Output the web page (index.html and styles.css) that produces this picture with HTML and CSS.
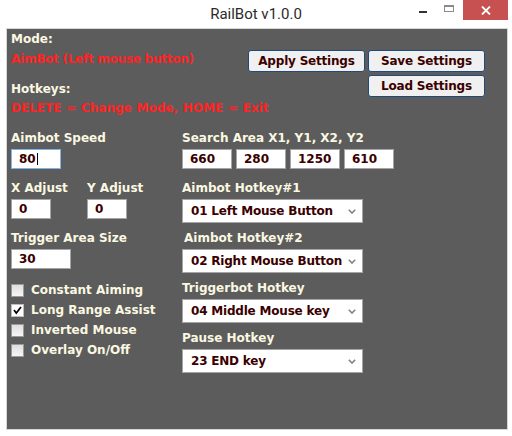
FILE: index.html
```html
<!DOCTYPE html>
<html>
<head>
<meta charset="utf-8">
<link rel="stylesheet" href="styles.css">
</head>
<body>
<div class="window">
  <div class="titlebar">
    <div></div>
    <div class="title">RailBot v1.0.0</div>
    <div class="controls">
      <div class="ctl"><span class="min"></span></div>
      <div class="ctl"><span class="max"></span></div>
      <div class="close">
        <svg width="10" height="9" viewBox="0 0 10 9"><path d="M1 0.5 L9 8.5 M9 0.5 L1 8.5" stroke="#fff" stroke-width="1.8" fill="none"/></svg>
      </div>
    </div>
  </div>
  <div class="panel">
    <div class="header">
      <div class="label r1">Mode:</div>
      <div class="red r2 tight">AimBot (Left mouse button)</div>
      <button class="btn apply">Apply Settings</button>
      <button class="btn save">Save Settings</button>
      <div class="label r3">Hotkeys:</div>
      <button class="btn load">Load Settings</button>
      <div class="red r4 wide">DELETE = Change Mode, HOME = Exit</div>
    </div>
    <div class="lower">
      <div class="col">
        <div class="group">
          <div class="label">Aimbot Speed</div>
          <div class="field focus w50">80<span class="caret"></span></div>
        </div>
        <div class="group row">
          <div class="sub">
            <div class="label">X Adjust</div>
            <div class="field w40">0</div>
          </div>
          <div class="sub">
            <div class="label">Y Adjust</div>
            <div class="field w40">0</div>
          </div>
        </div>
        <div class="group">
          <div class="label">Trigger Area Size</div>
          <div class="field w60">30</div>
        </div>
        <div class="checks">
          <div class="check"><span class="box"></span><span class="label">Constant Aiming</span></div>
          <div class="check"><span class="box on"><svg width="11" height="11" viewBox="0 0 11 11"><path d="M2 5 L4.3 8 L9 2" stroke="#000" stroke-width="1.7" fill="none"/></svg></span><span class="label">Long Range Assist</span></div>
          <div class="check"><span class="box"></span><span class="label">Inverted Mouse</span></div>
          <div class="check"><span class="box"></span><span class="label">Overlay On/Off</span></div>
        </div>
      </div>
      <div class="col">
        <div class="group">
          <div class="label">Search Area X1, Y1, X2, Y2</div>
          <div class="fields">
            <div class="field w50">660</div>
            <div class="field w50">280</div>
            <div class="field w50">1250</div>
            <div class="field w50">610</div>
          </div>
        </div>
        <div class="group">
          <div class="label">Aimbot Hotkey#1</div>
          <div class="select"><span>01 Left Mouse Button</span><svg class="chev" width="8" height="5" viewBox="0 0 8 5"><path d="M0.8 0.8 L4 4 L7.2 0.8" stroke="#808080" stroke-width="1.6" fill="none"/></svg></div>
        </div>
        <div class="group">
          <div class="label indent">Aimbot Hotkey#2</div>
          <div class="select"><span>02 Right Mouse Button</span><svg class="chev" width="8" height="5" viewBox="0 0 8 5"><path d="M0.8 0.8 L4 4 L7.2 0.8" stroke="#808080" stroke-width="1.6" fill="none"/></svg></div>
        </div>
        <div class="group">
          <div class="label">Triggerbot Hotkey</div>
          <div class="select"><span>04 Middle Mouse key</span><svg class="chev" width="8" height="5" viewBox="0 0 8 5"><path d="M0.8 0.8 L4 4 L7.2 0.8" stroke="#808080" stroke-width="1.6" fill="none"/></svg></div>
        </div>
        <div class="group">
          <div class="label">Pause Hotkey</div>
          <div class="select"><span>23 END key</span><svg class="chev" width="8" height="5" viewBox="0 0 8 5"><path d="M0.8 0.8 L4 4 L7.2 0.8" stroke="#808080" stroke-width="1.6" fill="none"/></svg></div>
        </div>
      </div>
    </div>
  </div>
</div>
</body>
</html>
```
FILE: styles.css
```css
html, body {
  margin: 0;
  padding: 0;
  background: #ffffff;
}
.window {
  width: 512px;
  height: 436px;
  background: #ffffff;
  overflow: hidden;
}
.titlebar {
  height: 28px;
  display: grid;
  grid-template-columns: 1fr auto 1fr;
  align-items: start;
}
.title {
  font-family: Roboto, "Noto Sans", sans-serif;
  font-size: 15px;
  color: #2b2b2b;
  line-height: 20px;
  padding-top: 4px;
}
.controls {
  display: flex;
  justify-content: flex-end;
  padding-right: 4px;
}
.ctl {
  width: 26px;
  height: 20px;
  display: flex;
  align-items: center;
  justify-content: center;
}
.min {
  width: 8px;
  height: 2px;
  background: #333;
  margin-top: 4px;
}
.max {
  width: 8px;
  height: 4px;
  border: 1px solid #8a8a8a;
  border-top-width: 2px;
  margin-top: -4px;
}
.close {
  width: 45px;
  height: 20px;
  margin-left: 1px;
  background: #c75050;
  display: flex;
  align-items: center;
  justify-content: center;
}
.panel {
  margin-left: 6px;
  width: 492px;
  height: 398px;
  border: 1px solid #d6d6d6;
  background: #5c5c5c;
  padding: 2px 4px 0;
  font-family: "DejaVu Sans", Verdana, sans-serif;
  font-weight: bold;
  font-size: 12px;
}
.label {
  color: #fbf8e2;
  line-height: 16px;
  height: 16px;
  white-space: nowrap;
}
.red {
  color: #ff2424;
  line-height: 16px;
  white-space: nowrap;
}
.tight { letter-spacing: -0.25px; }
.wide { word-spacing: 0.6px; }
.header {
  display: grid;
  grid-template-columns: 234px 117px 117px;
  grid-template-rows: 16px 22px 22px 16px;
  column-gap: 3px;
  row-gap: 3px;
}
.r1 { grid-column: 1; grid-row: 1; }
.r2 { grid-column: 1; grid-row: 2; margin-top: 1px; }
.r3 { grid-column: 1; grid-row: 3; align-self: end; }
.r4 { grid-column: 1 / 4; grid-row: 4; }
.apply { grid-column: 2; grid-row: 2; }
.save { grid-column: 3; grid-row: 2; }
.load { grid-column: 3; grid-row: 3; }
.btn {
  margin: 0;
  padding: 0;
  height: 22px;
  border: 1px solid #1f4a7e;
  border-radius: 3px;
  background: #f0f0f0;
  color: #3a0000;
  font-family: "DejaVu Sans", Verdana, sans-serif;
  font-weight: bold;
  font-size: 12px;
  letter-spacing: -0.2px;
}
.lower {
  margin-top: 14px;
  display: grid;
  grid-template-columns: 171px 1fr;
}
.col {
  display: flex;
  flex-direction: column;
}
.group {
  height: 50px;
  display: flex;
  flex-direction: column;
}
.group .label {
  margin-bottom: 3px;
}
.group.row {
  flex-direction: row;
}
.sub {
  width: 76px;
  display: flex;
  flex-direction: column;
}
.sub .label { margin-bottom: 3px; }
.field {
  box-sizing: border-box;
  height: 20px;
  border: 1px solid #a6a6a6;
  background: #ffffff;
  color: #3a0000;
  padding-left: 7px;
  line-height: 18px;
  display: flex;
  align-items: center;
}
.field.focus { border-color: #7eb4ea; }
.caret {
  width: 1px;
  height: 12px;
  background: #000;
  margin-left: 1px;
}
.w40 { width: 40px; }
.w50 { width: 50px; }
.w60 { width: 60px; }
.fields {
  display: flex;
  gap: 4px;
}
.indent { padding-left: 2px; }
.select {
  box-sizing: border-box;
  width: 181px;
  height: 24px;
  border: 1px solid #a6a6a6;
  background: #ffffff;
  color: #3a0000;
  padding: 0 6px 0 8px;
  display: flex;
  align-items: center;
  justify-content: space-between;
  white-space: nowrap;
  letter-spacing: -0.2px;
}
.chev { flex: none; }
.checks {
  display: flex;
  flex-direction: column;
}
.check {
  height: 20px;
  display: flex;
  align-items: center;
  gap: 7px;
}
.box {
  box-sizing: border-box;
  width: 13px;
  height: 13px;
  border: 1px solid #9a9a9a;
  background: linear-gradient(#dedede, #f6f6f6);
  display: flex;
  align-items: center;
  justify-content: center;
}
.box.on {
  background: #ffffff;
  border-color: #bcbcbc;
}
```
